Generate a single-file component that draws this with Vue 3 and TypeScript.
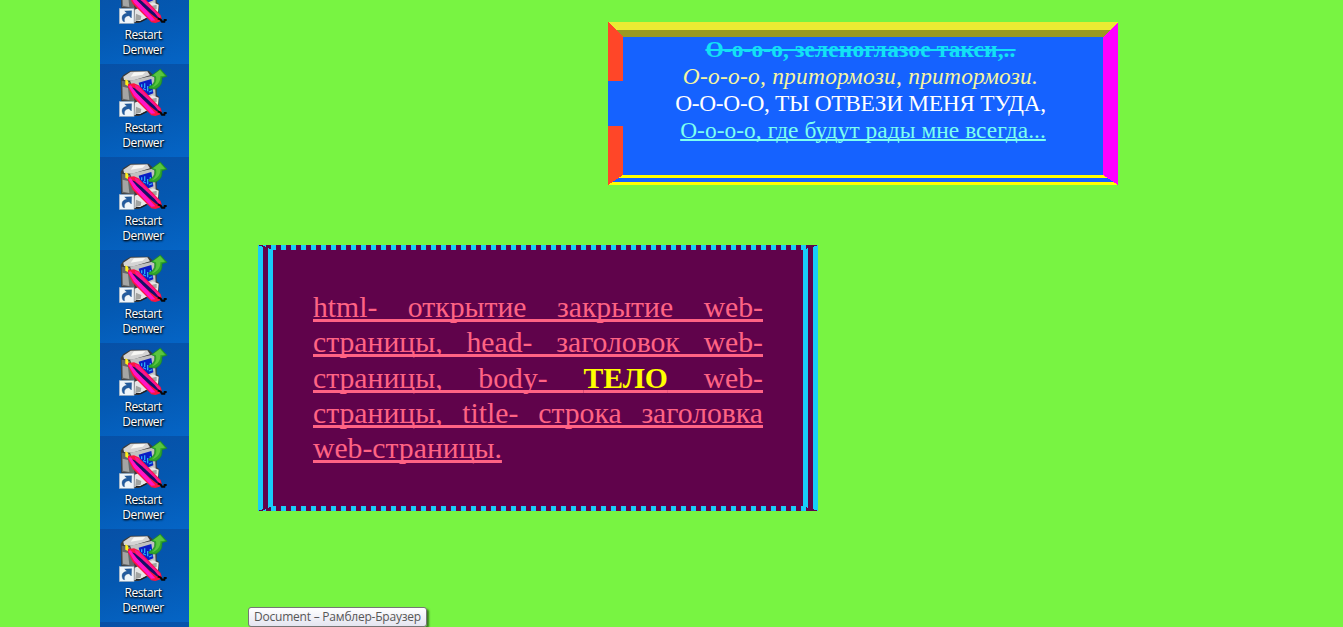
<script setup lang="ts">
const shortcuts: number[] = Array.from({ length: 7 }, (_, i) => i)
const dashes: number[] = Array.from({ length: 54 }, (_, i) => 13 + i * 10)
</script>

<template>
  <div class="page">
    <aside class="strip">
      <div v-for="n in shortcuts" :key="n" class="tile">
        <svg class="icon" width="60" height="56" viewBox="0 0 180 168">
          <path d="M20 44 L28 33 L50 20 L104 20 L128 42 L128 94 L136 100 L134 124 L74 156 L60 156 L60 112 L22 112Z" fill="#3a3c3e" />
          <path d="M28 38 L50 23 L100 22 L108 34 L62 48 L52 50 L30 48Z" fill="#d4d4d4" />
          <path d="M60 25 L94 24 L86 32 L50 38Z" fill="#f7f7f4" />
          <path d="M23 50 L48 54 L62 112 L24 108Z" fill="#66686a" />
          <path d="M26 68 L42 72 L46 108 L27 104Z" fill="#a4a5a4" />
          <path d="M48 50 L122 34 L125 98 L70 108Z" fill="#c0c1c0" />
          <path d="M74 56 L112 45 L118 88 L98 96 L82 84Z" fill="#0a1ec4" />
          <path d="M83 61 v9 M92 58 v14 M101 66 v16 M109 60 v14 M87 74 l9 4 M105 84 l10 -4" fill="none" stroke="#2aa8f5" stroke-width="4" />
          <path d="M62 116 L116 94 L134 101 L132 122 L74 153 L61 153Z" fill="#e6e6e6" />
          <path d="M66 128 L82 135 L80 146 L64 150Z M108 106 L128 101 L128 114 L116 118Z" fill="#a1a3a1" />
          <path d="M65 152 L80 152 L98 143" fill="none" stroke="#202124" stroke-width="4" />
          <path d="M34 46 L42 50 L44 60 L42 66 L34 62Z" fill="#ffee1c" />
          <path d="M42 60 L60 58 L74 64 L140 132 L144 146 L136 152 L124 156 L112 154 L56 98 L42 70Z" fill="#fb1440" />
          <path d="M43 66 L50 64 L124 148 L112 149 L60 95Z" fill="#ff14c8" />
          <path d="M62 62 L72 66 L139 135 L137 143 L66 74Z" fill="#ff1290" />
          <path d="M54 70 L62 73 L84 91 L106 111 L122 126 L135 142 L128 142 L108 126 L88 107 L68 87Z" fill="#14106a" />
          <path d="M131 142 L140 146 L144 152 L151 152 L152 147 L158 147" fill="none" stroke="#050507" stroke-width="6" />
          <path d="M106 74 L124 75 C141 68 145 56 144 41 L159 37 L139 15 L112 35 L122 39 C124 52 119 62 104 69Z" fill="#2ea52b" stroke="#1d8429" stroke-width="2" />
          <path d="M114 70 C134 64 140 50 139 37 L153 35 L138 18 L117 34 L126 37 C129 51 125 60 114 70Z" fill="#5ac63f" />
          <rect x="16" y="113" width="44" height="44" fill="#eef5fa" stroke="#a7b4c0" stroke-width="2" />
          <path d="M27 151 C20 137 27 128 39 127 L32 120 L53 119 L52 141 L45 134 C35 135 29 141 32 152Z" fill="#235c9f" stroke="#174779" stroke-width="1" />
        </svg>
        <div class="label"><span>Restart</span><span>Denwer</span></div>
      </div>
      <div class="tile"></div>
    </aside>

    <main class="content">
      <section class="song">
        <svg class="frame" width="510" height="163" shape-rendering="crispEdges">
          <path d="M0 0H510L495 15H15Z" fill="#ebeb33" />
          <path d="M8 8H502L495 15H15Z" fill="#999922" />
          <path d="M0 0L15 15V59H0Z M0 104H15V153L0 163Z" fill="#ff4628" />
          <path d="M510 0L495 15V153L510 163Z" fill="#ff00ff" />
          <path d="M15 153H495L499.5 156H10.5Z M4.5 160H505.5L510 163H0Z" fill="#ffff00" />
        </svg>
        <p class="line struck">О-о-о-о, зеленоглазое такси,..</p>
        <p class="line slanted">О-о-о-о, притормози, притормози.</p>
        <p class="line upper">О-о-о-о, ты отвези меня туда,</p>
        <p class="line under">О-о-о-о, где будут рады мне всегда...</p>
      </section>

      <section class="tags">
        <svg class="frame" width="560" height="266" shape-rendering="crispEdges" fill="#18cdf8">
          <template v-for="x in dashes" :key="x">
            <rect :x="x" y="0" width="5" height="5" />
            <rect :x="x" y="261" width="5" height="5" />
          </template>
          <path d="M0 0L5 2V264L0 266Z M10 3L15 5V261L10 263Z M4 0H8V2Z M4 266H8V264Z" />
          <path d="M560 0L555 2V264L560 266Z M550 3L545 5V261L550 263Z" />
        </svg>
        <p class="tagtext">html- открытие закрытие web-страницы, head- заголовок web-страницы, body- <b>ТЕЛО</b> web-страницы, title- строка заголовка web-страницы.</p>
      </section>
    </main>

    <div class="tooltip"><span>Document – Рамблер-Браузер</span></div>
  </div>
</template>

<style>
body {
  margin: 0;
  overflow: hidden;
}
</style>

<style scoped>
.page {
  position: relative;
  display: flex;
  box-sizing: border-box;
  width: 1343px;
  height: 627px;
  padding-left: 100px;
  overflow: hidden;
  background: #78f442;
  font-family: "Liberation Serif", "Times New Roman", serif;
}
.strip {
  flex: none;
  display: flex;
  flex-direction: column;
  width: 89px;
  height: 656px;
  margin-top: -29px;
}
.tile {
  flex: none;
  height: 93px;
  background: linear-gradient(165deg, #0750a6 0%, #0458b1 50%, #0565c6 100%);
}
.icon {
  display: block;
  margin-left: 14px;
}
.label {
  display: flex;
  flex-direction: column;
  align-items: center;
  margin-left: -3px;
  color: #fff;
  font: 12px/15px "Open Sans", "Noto Sans", sans-serif;
  letter-spacing: -0.4px;
  text-shadow: 1px 1px 2px #000, 0 1px 2px rgba(0, 0, 0, 0.8);
}
.content {
  flex: 1;
}
.song,
.tags {
  position: relative;
  box-sizing: border-box;
}
.frame {
  position: absolute;
  inset: 0;
}
.song {
  width: 510px;
  height: 163px;
  margin: 22px 0 0 419px;
  padding: 14px 15px 0;
  background: #1562ff;
  text-align: center;
}
.line {
  margin: 0 5px 0 0;
  font-size: 23.4px;
  line-height: 27px;
  white-space: nowrap;
}
.struck {
  color: #12e2f5;
  font-weight: bold;
  letter-spacing: 0.14px;
  text-decoration: line-through;
}
.slanted {
  color: #f5f5a0;
  font-style: italic;
  letter-spacing: 0.25px;
}
.upper {
  color: #fff;
  letter-spacing: -0.31px;
  text-transform: uppercase;
}
.under {
  margin-right: 0;
  color: #7dfff0;
  letter-spacing: 0.05px;
  text-decoration: underline;
  text-decoration-thickness: 2px;
  text-decoration-skip-ink: none;
}
.tags {
  width: 560px;
  height: 266px;
  margin: 60px 0 0 69px;
  padding: 45px 55px;
  background: #60034b;
}
.tagtext {
  margin: 0;
  color: #ff6384;
  font-size: 29.7px;
  line-height: 35.25px;
  text-align: justify;
  text-decoration: underline;
  text-decoration-thickness: 3px;
  text-decoration-skip-ink: none;
}
.tagtext b {
  color: #ffff00;
}
.tooltip {
  position: absolute;
  left: 248px;
  top: 607px;
  box-sizing: border-box;
  width: 179px;
  height: 20px;
  border: 1px solid #767676;
  border-radius: 3px;
  background: linear-gradient(#fff, #e4e5f0);
  box-shadow: 2px 2px 2px rgba(0, 0, 0, 0.5);
  color: #575757;
  font: 12px/18px "Open Sans", "Noto Sans", sans-serif;
  text-align: center;
  white-space: nowrap;
}
.tooltip span {
  letter-spacing: -0.22px;
}
</style>
